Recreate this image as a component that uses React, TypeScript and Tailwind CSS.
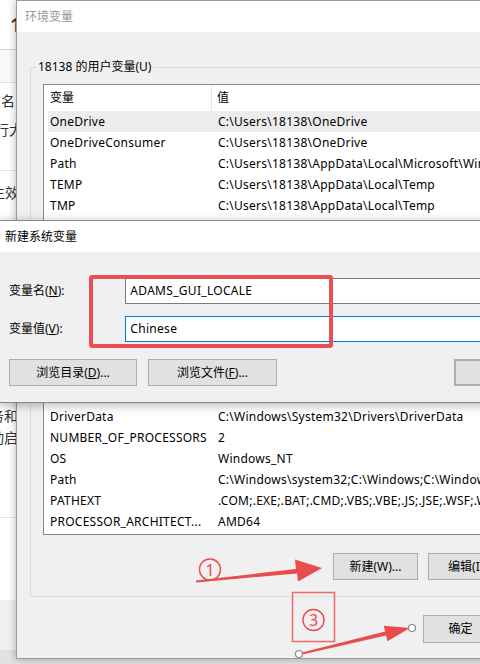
import React from "react";

type Row = { name: string; value: string; selected?: boolean };

const userRows: Row[] = [
  { name: "OneDrive", value: "C:\\Users\\18138\\OneDrive", selected: true },
  { name: "OneDriveConsumer", value: "C:\\Users\\18138\\OneDrive" },
  { name: "Path", value: "C:\\Users\\18138\\AppData\\Local\\Microsoft\\WindowsApps;" },
  { name: "TEMP", value: "C:\\Users\\18138\\AppData\\Local\\Temp" },
  { name: "TMP", value: "C:\\Users\\18138\\AppData\\Local\\Temp" },
];

const systemRows: Row[] = [
  { name: "asl.log", value: "Destination=file" },
  { name: "ComSpec", value: "C:\\Windows\\system32\\cmd.exe" },
  { name: "configsetroot", value: "C:\\Windows\\ConfigSetRoot" },
  { name: "DriverData", value: "C:\\Windows\\System32\\Drivers\\DriverData" },
  { name: "NUMBER_OF_PROCESSORS", value: "2" },
  { name: "OS", value: "Windows_NT" },
  { name: "Path", value: "C:\\Windows\\system32;C:\\Windows;C:\\Windows\\System32\\Wbem;" },
  { name: "PATHEXT", value: ".COM;.EXE;.BAT;.CMD;.VBS;.VBE;.JS;.JSE;.WSF;.WSH;.MSC" },
  { name: "PROCESSOR_ARCHITECT...", value: "AMD64" },
];

const VarList = ({ rows, className }: { rows: Row[]; className: string }) => (
  <div className={`w-[470px] overflow-hidden border border-[#828790] bg-white ${className}`}>
    <div className="flex h-[26px]">
      <div className="flex w-[168px] items-center border-r border-[#e5e5e5] pl-[6px]">变量</div>
      <div className="flex items-center pl-[5px]">值</div>
    </div>
    {rows.map((r) => (
      <div
        key={r.name + r.value}
        className={`ml-[4px] flex h-[21px] items-center whitespace-nowrap tracking-[0.25px] ${r.selected ? "bg-[#ececec]" : ""}`}
      >
        <div className="w-[164px] shrink-0 overflow-hidden pl-[2px]">{r.name}</div>
        <div className="pl-[6px]">{r.value}</div>
      </div>
    ))}
  </div>
);

const Button = ({ label, className = "" }: { label: React.ReactNode; className?: string }) => (
  <div
    className={`flex h-[27px] shrink-0 items-center justify-center border border-[#adadad] bg-[#e1e1e1] ${className}`}
  >
    {label}
  </div>
);

// window behind the environment dialog, only a thin strip shows
const BackWindow = () => (
  <div className="absolute left-0 top-0 flex h-[664px] w-[30px] flex-col overflow-hidden bg-white text-[14px] leading-[20px] text-[#333]">
    <div className="h-[49px] pl-[10px] pt-[13px] text-[20px] font-semibold leading-[24px] text-[#333]">1</div>
    <div className="h-[33px] border-t border-[#d5d5d5] bg-[#f9f9f9]" />
    <div className="flex h-[36px] items-center whitespace-nowrap border-t border-[#e2e2e2] pl-[1px]">名</div>
    <div className="h-[52px] whitespace-nowrap pt-[2px] -ml-[5px]">行大</div>
    <div className="h-[235px] whitespace-nowrap border-t border-[#e2e2e2] pt-[12px] -ml-[9px]">生效</div>
    <div className="flex h-[112px] flex-col whitespace-nowrap leading-[22px] -ml-[10px]">
      <span>务和</span>
      <span>动启</span>
    </div>
    <div className="h-[83px] border-t border-[#e2e2e2]" />
    <div className="h-[50px] bg-[#f0f0f0]" />
    <div className="flex-1 bg-[#e2e2e2]" />
  </div>
);

const EnvWindow = () => (
  <div className="absolute left-[16px] top-0 flex h-[659px] w-[520px] flex-col border border-[#9a9a9a] bg-[#f0f0f0] shadow-[0_0_8px_rgba(0,0,0,0.3)]">
    <div className="flex h-[31px] items-center bg-white pl-[8px] text-[#999]">环境变量</div>
    <div className="flex flex-col pl-[13px] pt-[27px]">
      <fieldset className="w-[480px] border border-[#dcdcdc] pb-[10px]">
        <legend className="ml-[5px] px-[2px] leading-[16px]">18138 的用户变量(U)</legend>
        <VarList rows={userRows} className="ml-[12px] mt-[9px] h-[185px]" />
      </fieldset>
      <fieldset className="mt-[11px] w-[480px] border border-[#dcdcdc] pb-[16px]">
        <legend className="ml-[5px] px-[2px] leading-[16px]">系统变量(S)</legend>
        <VarList rows={systemRows} className="ml-[12px] mt-[9px] h-[219px]" />
        <div className="mt-[18px] flex gap-[10px] pl-[302px]">
          <Button label="新建(W)..." className="w-[85px]" />
          <Button label="编辑(I)..." className="w-[85px]" />
        </div>
      </fieldset>
      <div className="mt-[18px] flex pl-[393px]">
        <Button label="确定" className="h-[28px] w-[75px]" />
      </div>
    </div>
  </div>
);

const NewVarDialog = () => (
  <div className="absolute left-[-2px] top-[220px] flex h-[183px] w-[500px] flex-col border border-[#888] bg-[#f0f0f0] shadow-[0_2px_10px_rgba(0,0,0,0.3)]">
    <div className="flex h-[31px] items-center bg-white pl-[6px]">新建系统变量</div>
    <div className="flex flex-col pl-[10px] pt-[26px]">
      <div className="flex h-[26px] items-center">
        <div className="w-[119px]">
          变量名(<span className="underline">N</span>):
        </div>
        <div className="flex h-[26px] w-[380px] items-center border border-[#7a7a7a] bg-white pl-[4px] tracking-[0.3px]">
          ADAMS_GUI_LOCALE
        </div>
      </div>
      <div className="mt-[12px] flex h-[26px] items-center">
        <div className="w-[119px]">
          变量值(<span className="underline">V</span>):
        </div>
        <div className="flex h-[26px] w-[380px] items-center border border-[#0078d7] bg-white pl-[4px] tracking-[0.3px]">
          Chinese
        </div>
      </div>
      <div className="mt-[17px] flex">
        <Button
          label={
            <>
              浏览目录(<span className="underline">D</span>)...
            </>
          }
          className="w-[128px]"
        />
        <Button
          label={
            <>
              浏览文件(<span className="underline">F</span>)...
            </>
          }
          className="ml-[11px] w-[129px]"
        />
        <Button label="确定" className="ml-[177px] w-[75px] border-2 border-[#0078d7]" />
      </div>
    </div>
  </div>
);

// red callouts drawn over the windows
const Marks = () => (
  <>
    <div className="absolute left-[89px] top-[275px] h-[73px] w-[244px] rounded-[3px] border-4 border-[#ea4f57]" />
    <svg className="pointer-events-none absolute left-0 top-0" width={480} height={664} viewBox="0 0 480 664">
      <circle cx={210} cy={569.5} r={10.5} fill="none" stroke="#e84c4c" strokeWidth={1.4} />
      <text x={210} y={575.5} textAnchor="middle" fontSize={16} fill="#e84c4c" fontFamily="Noto Sans, sans-serif">
        1
      </text>
      <polygon
        points="196,580.6 296,569 295,559.5 322,568 298,581.6 297,573.5 196,582.4"
        fill="#e84c4c"
      />
      <rect x={292.5} y={592.5} width={42} height={49} fill="none" stroke="#ec6a6a" strokeWidth={1.5} />
      <circle cx={313.5} cy={620} r={10.5} fill="none" stroke="#e84c4c" strokeWidth={1.4} />
      <text x={313.5} y={626} textAnchor="middle" fontSize={16} fill="#e84c4c" fontFamily="Noto Sans, sans-serif">
        3
      </text>
      <polygon
        points="300,653 385.1,631.6 383.8,625.7 410,628 387.4,641.3 386.1,635.4 300,655"
        fill="#e84c4c"
      />
      <circle cx={299} cy={654} r={3.5} fill="#fff" stroke="#8a8a8a" strokeWidth={1.2} />
      <circle cx={412} cy={628} r={3.5} fill="#fff" stroke="#8a8a8a" strokeWidth={1.2} />
    </svg>
  </>
);

export default function App() {
  return (
    <div className="relative h-[664px] w-[480px] overflow-hidden bg-[#e2e2e2] font-['Noto_Sans','Noto_Sans_CJK_SC',sans-serif] text-[12px] leading-[16px] text-black">
      <BackWindow />
      <EnvWindow />
      <NewVarDialog />
      <Marks />
    </div>
  );
}
